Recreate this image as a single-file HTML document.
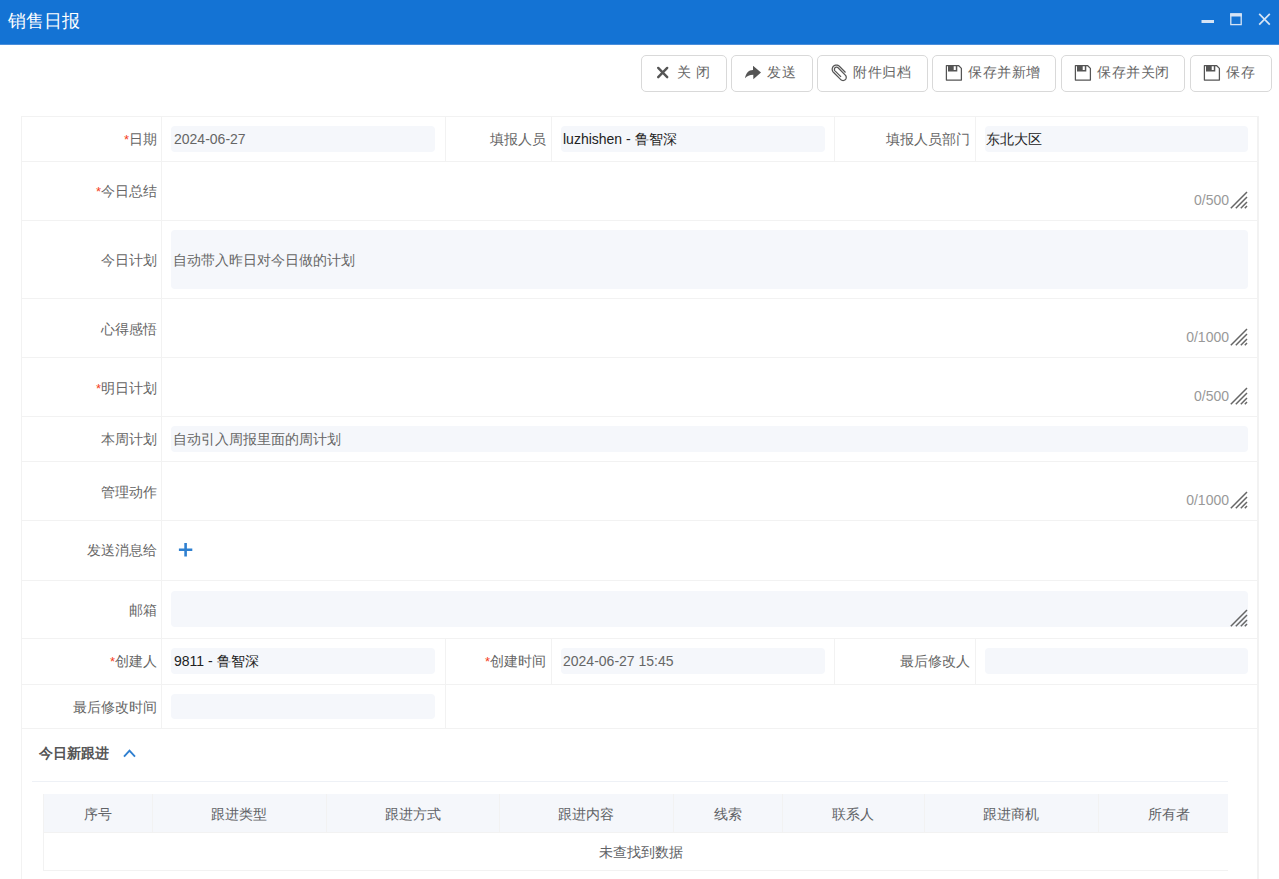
<!DOCTYPE html>
<html><head><meta charset="utf-8">
<style>
*{box-sizing:border-box;margin:0;padding:0}
html,body{width:1279px;height:879px;overflow:hidden;background:#fff;font-family:"Liberation Sans",sans-serif;font-size:14px;color:#606266}
.a{position:absolute}
#hd{position:absolute;left:0;top:0;width:1279px;height:44px;background:#1473d4;box-shadow:0 1px 0 #4a8edb}
#hd .t{position:absolute;left:8px;top:9px;font-size:17.5px;line-height:24px;color:#fff}
.btn{position:absolute;top:55px;height:37px;border:1px solid #d9d9d9;border-radius:5px;background:#fff;color:#666}
.btn svg{position:absolute}
.btn span{position:absolute;top:7px;line-height:18px;font-size:14px;white-space:nowrap;letter-spacing:0.5px}
.hl{position:absolute;height:1px;background:#ebeef5}
.vl{position:absolute;width:1px;background:#ebeef5}
.lb{position:absolute;text-align:right;white-space:nowrap;line-height:18px;color:#666}
.lb i{font-style:normal;color:#f5401c;font-size:13px;vertical-align:0}
.in{position:absolute;background:#f5f7fb;border-radius:4px}
.vt{position:absolute;white-space:nowrap;line-height:18px}
.cnt{position:absolute;line-height:16px;color:#999;white-space:nowrap}
.rs{position:absolute;width:18px;height:18px}
</style></head><body>
<div id="hd"><div class="t">销售日报</div>
<svg class="a" style="left:1200px;top:10px" width="72" height="20" viewBox="0 0 72 20">
<rect x="1.5" y="10" width="12.5" height="3" fill="#d6e4f5"/>
<rect x="30.8" y="4" width="10.4" height="10.6" fill="none" stroke="#d6e4f5" stroke-width="1.3"/>
<rect x="30.2" y="3.3" width="11.6" height="3.2" fill="#d6e4f5"/>
<path d="M59.2 3.8 L69.8 14.6 M69.8 3.8 L59.2 14.6" stroke="#d6e4f5" stroke-width="1.7"/>
</svg>
</div>

<!-- toolbar buttons -->
<div class="btn" style="left:641px;width:86px">
<svg style="left:8px;top:4px" width="26" height="26" viewBox="0 0 26 26"><path d="M8.2 7.9 L17.2 17.2 M17.2 7.9 L8.2 17.2" stroke="#555" stroke-width="2.4" stroke-linecap="round"/></svg>
<span style="left:35px">关 闭</span></div>
<div class="btn" style="left:731px;width:82px">
<svg style="left:8px;top:4px" width="26" height="26" viewBox="0 0 26 26"><path d="M13.3 5.9 L21 12.4 L13.3 19.2 V14.8 C9.5 14.8 7 16 5 18.3 C5.8 13.5 8.5 10.1 13 10.1 V5.9 Z" fill="#555"/></svg>
<span style="left:35px">发送</span></div>
<div class="btn" style="left:817px;width:111px">
<svg style="left:8px;top:4px" width="26" height="26" viewBox="0 0 26 26"><path d="M19.52 12.45 L13.36 6.29 L12.73 5.77 L12.00 5.38 L11.21 5.14 L10.39 5.06 L9.58 5.14 L8.79 5.38 L8.06 5.77 L7.42 6.29 L6.90 6.93 L6.51 7.66 L6.28 8.44 L6.19 9.26 L6.28 10.08 L6.51 10.87 L6.90 11.60 L7.42 12.23 L14.78 19.59 L15.26 19.98 L15.82 20.28 L16.42 20.46 L17.04 20.52 L17.67 20.46 L18.27 20.28 L18.82 19.98 L19.30 19.59 L19.70 19.10 L20.00 18.55 L20.18 17.95 L20.24 17.32 L20.18 16.70 L20.00 16.10 L19.70 15.55 L19.30 15.06 L12.06 7.81 L11.73 7.55 L11.36 7.35 L10.96 7.23 L10.54 7.18 L10.12 7.23 L9.71 7.35 L9.34 7.55 L9.02 7.81 L8.75 8.14 L8.55 8.51 L8.43 8.91 L8.39 9.33 L8.43 9.75 L8.55 10.16 L8.75 10.53 L9.02 10.85 L15.06 16.90" fill="none" stroke="#555" stroke-width="1.25"/></svg>
<span style="left:35px">附件归档</span></div>
<div class="btn" style="left:932px;width:124px">
<svg style="left:8px;top:4px" width="26" height="26" viewBox="0 0 26 26"><path d="M5.4 5.5 H17.5 L20.4 8.4 V20 H5.4 Z" fill="none" stroke="#555" stroke-width="1.25" stroke-linejoin="round"/><path d="M7 5.5 H16.3 V11.4 H7 Z M12.7 6.1 H14.8 V10 H12.7 Z" fill="#555" fill-rule="evenodd"/></svg>
<span style="left:35px">保存并新增</span></div>
<div class="btn" style="left:1061px;width:124px">
<svg style="left:8px;top:4px" width="26" height="26" viewBox="0 0 26 26"><path d="M5.4 5.5 H17.5 L20.4 8.4 V20 H5.4 Z" fill="none" stroke="#555" stroke-width="1.25" stroke-linejoin="round"/><path d="M7 5.5 H16.3 V11.4 H7 Z M12.7 6.1 H14.8 V10 H12.7 Z" fill="#555" fill-rule="evenodd"/></svg>
<span style="left:35px">保存并关闭</span></div>
<div class="btn" style="left:1190px;width:82px">
<svg style="left:8px;top:4px" width="26" height="26" viewBox="0 0 26 26"><path d="M5.4 5.5 H17.5 L20.4 8.4 V20 H5.4 Z" fill="none" stroke="#555" stroke-width="1.25" stroke-linejoin="round"/><path d="M7 5.5 H16.3 V11.4 H7 Z M12.7 6.1 H14.8 V10 H12.7 Z" fill="#555" fill-rule="evenodd"/></svg>
<span style="left:35px">保存</span></div>

<!-- FORM -->
<div class="hl" style="left:21px;top:116px;width:1237px;background:#f2f2f2"></div>
<div class="hl" style="left:21px;top:161px;width:1237px;background:#f2f2f2"></div>
<div class="hl" style="left:21px;top:220px;width:1237px;background:#f2f2f2"></div>
<div class="hl" style="left:21px;top:298px;width:1237px;background:#f2f2f2"></div>
<div class="hl" style="left:21px;top:357px;width:1237px;background:#f2f2f2"></div>
<div class="hl" style="left:21px;top:416px;width:1237px;background:#f2f2f2"></div>
<div class="hl" style="left:21px;top:461px;width:1237px;background:#f2f2f2"></div>
<div class="hl" style="left:21px;top:520px;width:1237px;background:#f2f2f2"></div>
<div class="hl" style="left:21px;top:580px;width:1237px;background:#f2f2f2"></div>
<div class="hl" style="left:21px;top:638px;width:1237px;background:#f2f2f2"></div>
<div class="hl" style="left:21px;top:684px;width:1237px;background:#f2f2f2"></div>
<div class="hl" style="left:21px;top:728px;width:1237px;background:#f2f2f2"></div>
<div class="vl" style="left:21px;top:116px;height:763px;background:#f2f2f2"></div>
<div class="a" style="left:1257px;top:116px;width:2px;height:763px;background:#f2f2f2"></div>
<div class="vl" style="left:161px;top:116px;height:612px;background:#f2f2f2"></div>
<div class="vl" style="left:445px;top:116px;height:45px;background:#f2f2f2"></div>
<div class="vl" style="left:551px;top:116px;height:45px;background:#f2f2f2"></div>
<div class="vl" style="left:834px;top:116px;height:45px;background:#f2f2f2"></div>
<div class="vl" style="left:975px;top:116px;height:45px;background:#f2f2f2"></div>
<div class="vl" style="left:445px;top:638px;height:46px;background:#f2f2f2"></div>
<div class="vl" style="left:551px;top:638px;height:46px;background:#f2f2f2"></div>
<div class="vl" style="left:834px;top:638px;height:46px;background:#f2f2f2"></div>
<div class="vl" style="left:975px;top:638px;height:46px;background:#f2f2f2"></div>
<div class="vl" style="left:445px;top:684px;height:44px;background:#f2f2f2"></div>
<div class="lb" style="right:1122px;top:130px"><i>*</i>日期</div>
<div class="in" style="left:171px;top:126px;width:264px;height:26px"></div>
<div class="vt" style="left:174px;top:130.0px;color:#666">2024-06-27</div>
<div class="lb" style="right:733px;top:130px">填报人员</div>
<div class="in" style="left:561px;top:126px;width:264px;height:26px"></div>
<div class="vt" style="left:563px;top:130.0px;color:#222">luzhishen - 鲁智深</div>
<div class="lb" style="right:309px;top:130px">填报人员部门</div>
<div class="in" style="left:985px;top:126px;width:263px;height:26px"></div>
<div class="vt" style="left:986px;top:130.0px;color:#222">东北大区</div>
<div class="lb" style="right:1122px;top:182px"><i>*</i>今日总结</div>
<div class="cnt" style="right:50px;top:192px">0/500</div>
<svg class="rs" style="left:1229.5px;top:190.5px" width="18" height="18" viewBox="0 0 18 18"><path d="M0.8 17.2 L17 1 M5.8 17.2 L17 6 M10.8 17.2 L17 11 M14.8 17.2 L17 15" stroke="#666" stroke-width="1.5"/></svg>
<div class="lb" style="right:1122px;top:251px">今日计划</div>
<div class="in" style="left:171px;top:230px;width:1077px;height:59px"></div>
<div class="vt" style="left:173px;top:250.5px;color:#666">自动带入昨日对今日做的计划</div>
<div class="lb" style="right:1122px;top:320px">心得感悟</div>
<div class="cnt" style="right:50px;top:329px">0/1000</div>
<svg class="rs" style="left:1229.5px;top:327.5px" width="18" height="18" viewBox="0 0 18 18"><path d="M0.8 17.2 L17 1 M5.8 17.2 L17 6 M10.8 17.2 L17 11 M14.8 17.2 L17 15" stroke="#666" stroke-width="1.5"/></svg>
<div class="lb" style="right:1122px;top:379px"><i>*</i>明日计划</div>
<div class="cnt" style="right:50px;top:388px">0/500</div>
<svg class="rs" style="left:1229.5px;top:386.5px" width="18" height="18" viewBox="0 0 18 18"><path d="M0.8 17.2 L17 1 M5.8 17.2 L17 6 M10.8 17.2 L17 11 M14.8 17.2 L17 15" stroke="#666" stroke-width="1.5"/></svg>
<div class="lb" style="right:1122px;top:430px">本周计划</div>
<div class="in" style="left:171px;top:426px;width:1077px;height:26px"></div>
<div class="vt" style="left:173px;top:430.0px;color:#666">自动引入周报里面的周计划</div>
<div class="lb" style="right:1122px;top:483px">管理动作</div>
<div class="cnt" style="right:50px;top:492px">0/1000</div>
<svg class="rs" style="left:1229.5px;top:490.5px" width="18" height="18" viewBox="0 0 18 18"><path d="M0.8 17.2 L17 1 M5.8 17.2 L17 6 M10.8 17.2 L17 11 M14.8 17.2 L17 15" stroke="#666" stroke-width="1.5"/></svg>
<div class="lb" style="right:1122px;top:541px">发送消息给</div>
<svg class="a" style="left:178px;top:542px" width="15" height="15" viewBox="0 0 15 15"><path d="M7.6 1 V14.6 M0.9 7.8 H14.3" stroke="#2f80d0" stroke-width="2.6"/></svg>
<div class="lb" style="right:1122px;top:601px">邮箱</div>
<div class="in" style="left:171px;top:591px;width:1077px;height:36px"></div>
<svg class="rs" style="left:1230px;top:609px" width="18" height="18" viewBox="0 0 18 18"><path d="M0.8 17.2 L17 1 M5.8 17.2 L17 6 M10.8 17.2 L17 11 M14.8 17.2 L17 15" stroke="#666" stroke-width="1.5"/></svg>
<div class="lb" style="right:1122px;top:652px"><i>*</i>创建人</div>
<div class="in" style="left:171px;top:648px;width:264px;height:26px"></div>
<div class="vt" style="left:174px;top:652.0px;color:#222">9811 - 鲁智深</div>
<div class="lb" style="right:733px;top:652px"><i>*</i>创建时间</div>
<div class="in" style="left:561px;top:648px;width:264px;height:26px"></div>
<div class="vt" style="left:563px;top:652.0px;color:#666">2024-06-27 15:45</div>
<div class="lb" style="right:309px;top:652px">最后修改人</div>
<div class="in" style="left:985px;top:648px;width:263px;height:26px"></div>
<div class="lb" style="right:1122px;top:698px">最后修改时间</div>
<div class="in" style="left:171px;top:694px;width:264px;height:25px"></div>
<div class="a" style="left:39px;top:744px;font-size:14px;font-weight:bold;color:#555;line-height:18px">今日新跟进</div>
<svg class="a" style="left:122px;top:748px" width="16" height="11" viewBox="0 0 16 11"><path d="M2 8.6 L7.5 2.6 L13 8.6" fill="none" stroke="#2f7fd0" stroke-width="1.9"/></svg>
<div class="hl" style="left:32px;top:781px;width:1196px;background:#eef1f6"></div>
<div class="a" style="left:43px;top:794px;width:1185px;height:38px;background:#f5f7fb"></div>
<div class="a" style="left:43px;top:805px;width:109px;text-align:center;line-height:18px;color:#606266">序号</div>
<div class="a" style="left:152px;top:805px;width:174px;text-align:center;line-height:18px;color:#606266">跟进类型</div>
<div class="a" style="left:326px;top:805px;width:173px;text-align:center;line-height:18px;color:#606266">跟进方式</div>
<div class="a" style="left:499px;top:805px;width:174px;text-align:center;line-height:18px;color:#606266">跟进内容</div>
<div class="a" style="left:673px;top:805px;width:109px;text-align:center;line-height:18px;color:#606266">线索</div>
<div class="a" style="left:782px;top:805px;width:142px;text-align:center;line-height:18px;color:#606266">联系人</div>
<div class="a" style="left:924px;top:805px;width:174px;text-align:center;line-height:18px;color:#606266">跟进商机</div>
<div class="a" style="left:1098px;top:805px;width:141px;text-align:center;line-height:18px;color:#606266">所有者</div>
<div class="vl" style="left:152px;top:794px;height:38px;background:#f2f2f2"></div>
<div class="vl" style="left:326px;top:794px;height:38px;background:#f2f2f2"></div>
<div class="vl" style="left:499px;top:794px;height:38px;background:#f2f2f2"></div>
<div class="vl" style="left:673px;top:794px;height:38px;background:#f2f2f2"></div>
<div class="vl" style="left:782px;top:794px;height:38px;background:#f2f2f2"></div>
<div class="vl" style="left:924px;top:794px;height:38px;background:#f2f2f2"></div>
<div class="vl" style="left:1098px;top:794px;height:38px;background:#f2f2f2"></div>
<div class="a" style="left:1228px;top:794px;width:29px;height:80px;background:#fff"></div>
<div class="vl" style="left:43px;top:794px;height:76px;background:#f2f2f2"></div>
<div class="hl" style="left:43px;top:832px;width:1185px;background:#f2f2f2"></div>
<div class="hl" style="left:43px;top:870px;width:1185px;background:#f2f2f2"></div>
<div class="a" style="left:43px;top:843px;width:1196px;text-align:center;line-height:18px;color:#606266">未查找到数据</div>
</body></html>
